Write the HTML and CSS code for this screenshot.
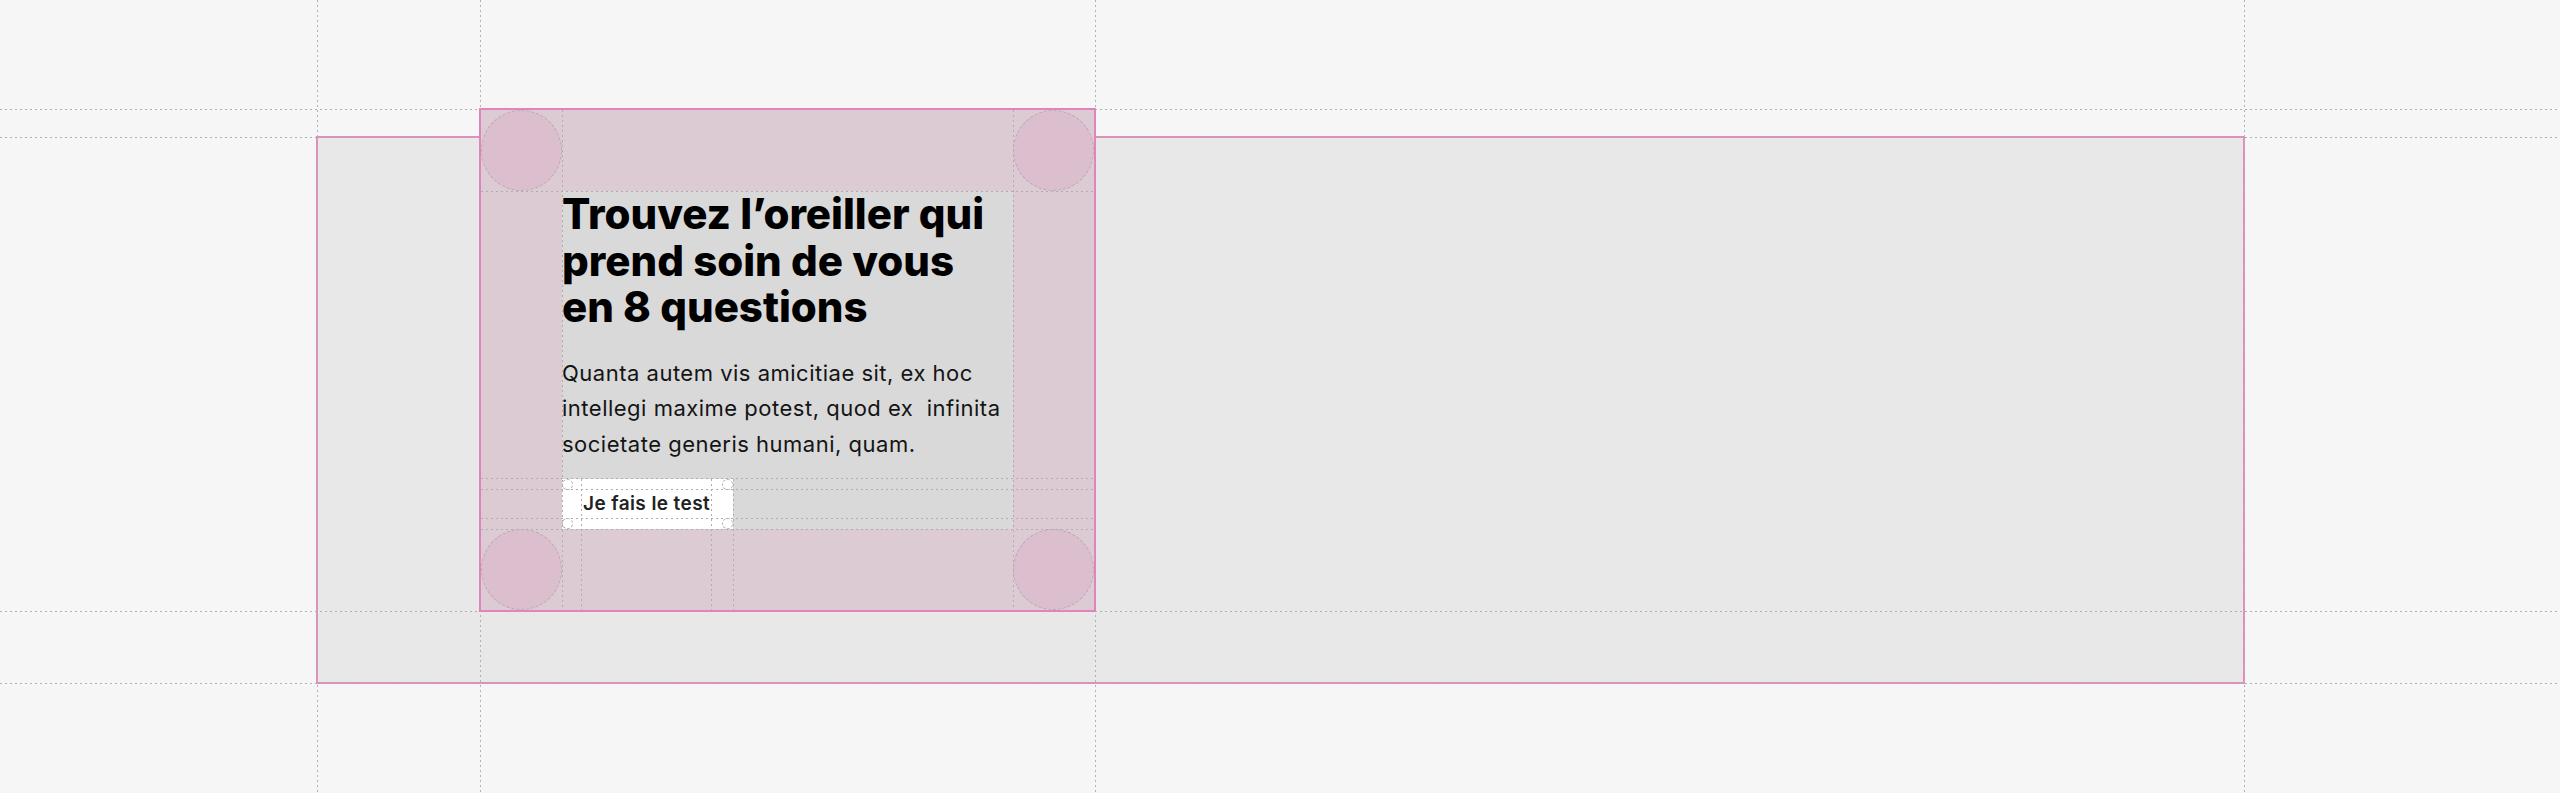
FILE: index.html
```html
<!DOCTYPE html>
<html lang="fr">
<head>
<meta charset="utf-8">
<title>Trouvez l’oreiller</title>
<link rel="stylesheet" href="styles.css">
</head>
<body>
<div class="page">
  <div class="guides">
    <div class="gh gh-1"></div>
    <div class="gh gh-2"></div>
    <div class="gh gh-3"></div>
    <div class="gh gh-4"></div>
    <div class="gv gv-1"></div>
    <div class="gv gv-2"></div>
    <div class="gv gv-3"></div>
    <div class="gv gv-4"></div>
  </div>
  <section class="section">
    <div class="card">
      <div class="corner"><span class="circle"></span></div>
      <div class="edge"></div>
      <div class="corner"><span class="circle"></span></div>
      <div class="edge"></div>
      <div class="content">
        <h1 class="title">Trouvez l’oreiller qui<br>prend soin de vous<br>en 8 questions</h1>
        <p class="lead">Quanta autem vis amicitiae sit, ex hoc<br>intellegi maxime potest, quod ex &nbsp;infinita<br>societate generis humani, quam.</p>
        <a class="btn" href="#">Je fais le test<span class="rc rc-tl"></span><span class="rc rc-tr"></span><span class="rc rc-bl"></span><span class="rc rc-br"></span></a>
      </div>
      <div class="edge"></div>
      <div class="corner"><span class="circle"></span></div>
      <div class="edge"></div>
      <div class="corner"><span class="circle"></span></div>
      <div class="cg cg-h cg-h1"></div>
      <div class="cg cg-h cg-h2"></div>
      <div class="cg cg-h cg-h3"></div>
      <div class="cg cg-h cg-h4"></div>
      <div class="cg cg-h cg-h5"></div>
      <div class="cg cg-v cg-v1"></div>
      <div class="cg cg-v cg-v2"></div>
      <div class="cg cg-v cg-v3"></div>
      <div class="cg cg-v cg-v4"></div>
      <div class="cg cg-v cg-v5"></div>
    </div>
  </section>
</div>
</body>
</html>
```
FILE: styles.css
```css
html, body {
  margin: 0;
  padding: 0;
  background: #f6f6f6;
}

.page {
  position: relative;
  width: 2560px;
  height: 793px;
  box-sizing: border-box;
  padding: 136px 0 0 316px;
  overflow: hidden;
  font-family: Inter, "Liberation Sans", sans-serif;
}

/* page guides */
.guides {
  position: absolute;
  inset: 0;
  z-index: 1;
  pointer-events: none;
}
.gh {
  position: absolute;
  left: 0;
  right: 0;
  height: 1px;
  background-image: linear-gradient(to right, #b1b1b1 0 2px, transparent 2px 5px);
  background-size: 5px 1px;
}
.gv {
  position: absolute;
  top: 0;
  bottom: 0;
  width: 1px;
  background-image: linear-gradient(to bottom, #b1b1b1 0 2px, transparent 2px 5px);
  background-size: 1px 5px;
}
.gh-1 { top: 109px; }
.gh-2 { top: 137px; }
.gh-3 { top: 611px; }
.gh-4 { top: 683px; }
.gv-1 { left: 317px; }
.gv-2 { left: 480px; }
.gv-3 { left: 1095px; }
.gv-4 { left: 2244px; }

.section {
  width: 1929px;
  height: 548px;
  box-sizing: border-box;
  border: 2px solid #e58cbe;
  background: #e8e8e8;
  padding-left: 161px;
}

.card {
  position: relative;
  z-index: 2;
  margin-top: -30px;
  width: fit-content;
  display: grid;
  grid-template-columns: 81px 451px 81px;
  grid-template-rows: 81px 338px 81px;
  border: 2px solid #e283b9;
  background: #dccbd3;
}

.corner {
  display: flex;
  align-items: center;
  justify-content: center;
}
.circle {
  width: 79px;
  height: 79px;
  border-radius: 50%;
  background: #dcbfce;
  border: 1px dashed #b9a9b1;
}

.content {
  background: #d9d9d9;
  display: flex;
  flex-direction: column;
  align-items: flex-start;
}

.title {
  margin: 0;
  font-family: Inter, "Liberation Sans", sans-serif;
  font-weight: 800;
  font-size: 42px;
  line-height: 46.5px;
  letter-spacing: 0;
  color: #000;
  white-space: nowrap;
}

.lead {
  margin: 25px 0 0;
  font-size: 22px;
  line-height: 35.5px;
  font-weight: 400;
  letter-spacing: 0.5px;
  color: #141414;
  white-space: nowrap;
}

.btn {
  position: relative;
  margin-top: 17px;
  box-sizing: border-box;
  width: 171px;
  height: 50px;
  padding: 10px 0 11px 21px;
  background: #fff;
  color: #222;
  text-decoration: none;
  font-size: 19px;
  font-weight: 600;
  line-height: 29px;
  letter-spacing: 0.4px;
  white-space: nowrap;
}
.rc {
  position: absolute;
  width: 9px;
  height: 9px;
  border-radius: 50%;
  border: 1px dashed #b5b5b5;
  background: #fff;
}
.rc-tl { top: 0; left: 0; }
.rc-tr { top: 0; right: 0; }
.rc-bl { bottom: 0; left: 0; }
.rc-br { bottom: 0; right: 0; }

/* card guides */
.cg {
  position: absolute;
  pointer-events: none;
}
.cg-h {
  left: 0;
  right: 0;
  height: 1px;
  background-image: linear-gradient(to right, #aeaeae 0 2px, transparent 2px 5px);
  background-size: 5px 1px;
}
.cg-v {
  width: 1px;
  bottom: 0;
  background-image: linear-gradient(to bottom, #aeaeae 0 2px, transparent 2px 5px);
  background-size: 1px 5px;
}
.cg-h1 { top: 81px; }
.cg-h2 { top: 368px; }
.cg-h3 { top: 379px; }
.cg-h4 { top: 408px; }
.cg-h5 { top: 419px; }
.cg-v1 { left: 81px; top: 0; }
.cg-v2 { left: 532px; top: 0; }
.cg-v3 { left: 100px; top: 369px; }
.cg-v4 { left: 230px; top: 369px; }
.cg-v5 { left: 252px; top: 369px; }
```
